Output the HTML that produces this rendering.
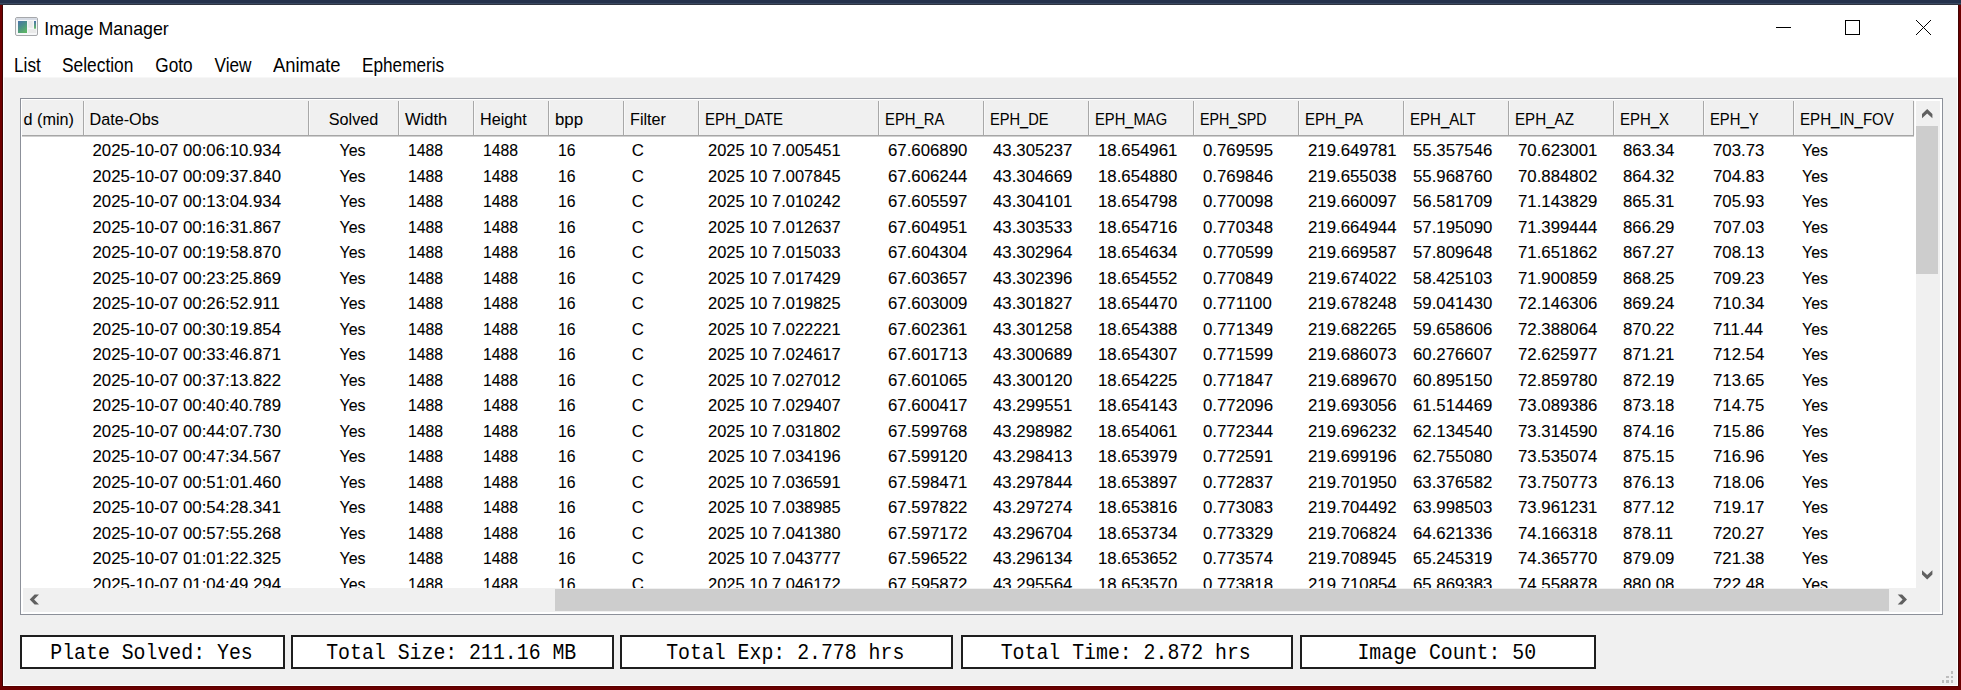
<!DOCTYPE html><html><head><meta charset="utf-8"><style>
*{margin:0;padding:0;box-sizing:border-box}
html,body{width:1961px;height:690px;overflow:hidden;background:#fff}
body{position:relative;font-family:"Liberation Sans",sans-serif;color:#000}
.a{position:absolute}
.t{position:absolute;white-space:pre;line-height:1}
.d{-webkit-text-stroke:0.1px #000}
.h{-webkit-text-stroke:0.05px #000}
</style></head><body>
<div class="a" style="left:0;top:0;width:1961px;height:3px;background:#25324c"></div>
<div class="a" style="left:0;top:3px;width:1961px;height:1px;background:#3a4962"></div>
<div class="a" style="left:0;top:4px;width:1961px;height:1px;background:#2f3440"></div>
<div class="a" style="left:0;top:5px;width:2px;height:685px;background:#700000"></div>
<div class="a" style="left:2px;top:5px;width:1px;height:681px;background:#3c0505"></div>
<div class="a" style="left:1959px;top:5px;width:2px;height:685px;background:#6b0000"></div>
<div class="a" style="left:1958px;top:5px;width:1px;height:681px;background:#420303"></div>
<div class="a" style="left:0;top:687px;width:1961px;height:3px;background:#6b0000"></div>
<div class="a" style="left:2px;top:686px;width:1957px;height:1px;background:#580000"></div>
<div class="a" style="left:4px;top:77px;width:1953px;height:1px;background:#f7f7f7"></div>
<div class="a" style="left:4px;top:78px;width:1953px;height:607px;background:#f0f0f0"></div>
<svg class="a" style="left:15px;top:17px" width="24" height="20" viewBox="0 0 24 20">
<defs><linearGradient id="g1" x1="0" y1="0" x2="0.6" y2="1"><stop offset="0" stop-color="#4a72aa"/><stop offset="0.5" stop-color="#4c9088"/><stop offset="1" stop-color="#5cb268"/></linearGradient>
<linearGradient id="g2" x1="0" y1="0" x2="0" y2="1"><stop offset="0" stop-color="#4a72aa"/><stop offset="1" stop-color="#66bb66"/></linearGradient></defs>
<rect x="0.5" y="0.5" width="22" height="18" rx="1.5" fill="#f6f7f8" stroke="#a6a8ab"/>
<rect x="1" y="1" width="21" height="2" fill="#d6dbe4"/>
<rect x="3" y="4" width="9" height="12" fill="url(#g1)"/>
<rect x="13.2" y="4" width="4.5" height="6.7" fill="#e9e9e9"/>
<rect x="19" y="4" width="2" height="7.7" fill="url(#g2)"/>
<rect x="13.2" y="12.3" width="8" height="3.7" fill="#e9e9e9"/>
</svg>
<div class="t" style="left:44.2px;top:21px;font-size:17.8px">Image Manager</div>
<div class="a" style="left:1776px;top:27px;width:15px;height:1.2px;background:#000"></div>
<div class="a" style="left:1845px;top:20px;width:15px;height:15px;border:1.3px solid #000"></div>
<svg class="a" style="left:1915px;top:19px" width="17" height="17" viewBox="0 0 17 17"><path d="M1 1L16 16M16 1L1 16" stroke="#000" stroke-width="1"/></svg>
<div class="t" style="left:14px;top:56px;font-size:17.2px;transform:scale(1,1.15);transform-origin:0 0">List</div>
<div class="t" style="left:61.7px;top:56px;font-size:17.2px;transform:scale(1.01,1.15);transform-origin:0 0">Selection</div>
<div class="t" style="left:155.3px;top:56px;font-size:17.2px;transform:scale(1,1.15);transform-origin:0 0">Goto</div>
<div class="t" style="left:214.6px;top:56px;font-size:17.2px;transform:scale(1,1.15);transform-origin:0 0">View</div>
<div class="t" style="left:273.3px;top:56px;font-size:17.2px;transform:scale(1.07,1.15);transform-origin:0 0">Animate</div>
<div class="t" style="left:362px;top:56px;font-size:17.2px;transform:scale(1,1.15);transform-origin:0 0">Ephemeris</div>
<div class="a" style="left:20px;top:98px;width:1923px;height:517px;border:1px solid #8c9099;background:#fff"></div>
<div class="a" style="left:22px;top:100px;width:1892px;height:35px;background:#f0f0f0"></div>
<div class="a" style="left:22px;top:135px;width:1892px;height:1px;background:#a6a6a6"></div>
<div class="a" style="left:22px;top:136px;width:1892px;height:1px;background:#cfcfcf"></div>
<div class="a" style="left:83px;top:101px;width:1px;height:34px;background:#a8a8a8"></div>
<div class="a" style="left:84px;top:101px;width:1px;height:34px;background:#f8f8f8"></div>
<div class="a" style="left:308px;top:101px;width:1px;height:34px;background:#a8a8a8"></div>
<div class="a" style="left:309px;top:101px;width:1px;height:34px;background:#f8f8f8"></div>
<div class="a" style="left:398px;top:101px;width:1px;height:34px;background:#a8a8a8"></div>
<div class="a" style="left:399px;top:101px;width:1px;height:34px;background:#f8f8f8"></div>
<div class="a" style="left:473px;top:101px;width:1px;height:34px;background:#a8a8a8"></div>
<div class="a" style="left:474px;top:101px;width:1px;height:34px;background:#f8f8f8"></div>
<div class="a" style="left:548px;top:101px;width:1px;height:34px;background:#a8a8a8"></div>
<div class="a" style="left:549px;top:101px;width:1px;height:34px;background:#f8f8f8"></div>
<div class="a" style="left:623px;top:101px;width:1px;height:34px;background:#a8a8a8"></div>
<div class="a" style="left:624px;top:101px;width:1px;height:34px;background:#f8f8f8"></div>
<div class="a" style="left:698px;top:101px;width:1px;height:34px;background:#a8a8a8"></div>
<div class="a" style="left:699px;top:101px;width:1px;height:34px;background:#f8f8f8"></div>
<div class="a" style="left:878px;top:101px;width:1px;height:34px;background:#a8a8a8"></div>
<div class="a" style="left:879px;top:101px;width:1px;height:34px;background:#f8f8f8"></div>
<div class="a" style="left:983px;top:101px;width:1px;height:34px;background:#a8a8a8"></div>
<div class="a" style="left:984px;top:101px;width:1px;height:34px;background:#f8f8f8"></div>
<div class="a" style="left:1088px;top:101px;width:1px;height:34px;background:#a8a8a8"></div>
<div class="a" style="left:1089px;top:101px;width:1px;height:34px;background:#f8f8f8"></div>
<div class="a" style="left:1193px;top:101px;width:1px;height:34px;background:#a8a8a8"></div>
<div class="a" style="left:1194px;top:101px;width:1px;height:34px;background:#f8f8f8"></div>
<div class="a" style="left:1298px;top:101px;width:1px;height:34px;background:#a8a8a8"></div>
<div class="a" style="left:1299px;top:101px;width:1px;height:34px;background:#f8f8f8"></div>
<div class="a" style="left:1403px;top:101px;width:1px;height:34px;background:#a8a8a8"></div>
<div class="a" style="left:1404px;top:101px;width:1px;height:34px;background:#f8f8f8"></div>
<div class="a" style="left:1508px;top:101px;width:1px;height:34px;background:#a8a8a8"></div>
<div class="a" style="left:1509px;top:101px;width:1px;height:34px;background:#f8f8f8"></div>
<div class="a" style="left:1613px;top:101px;width:1px;height:34px;background:#a8a8a8"></div>
<div class="a" style="left:1614px;top:101px;width:1px;height:34px;background:#f8f8f8"></div>
<div class="a" style="left:1703px;top:101px;width:1px;height:34px;background:#a8a8a8"></div>
<div class="a" style="left:1704px;top:101px;width:1px;height:34px;background:#f8f8f8"></div>
<div class="a" style="left:1793px;top:101px;width:1px;height:34px;background:#a8a8a8"></div>
<div class="a" style="left:1794px;top:101px;width:1px;height:34px;background:#f8f8f8"></div>
<div class="a" style="left:1913px;top:101px;width:1px;height:34px;background:#a8a8a8"></div>
<div class="a" style="left:1914px;top:101px;width:1px;height:34px;background:#f8f8f8"></div>
<div class="t h" style="left:23.5px;top:111.4px;font-size:16.2px">d (min)</div>
<div class="t h" style="left:89.5px;top:111.4px;font-size:16.2px;transform:scaleX(1);transform-origin:0 0">Date-Obs</div>
<div class="t h" style="left:308.5px;width:90.0px;text-align:center;top:111.4px;font-size:16.2px">Solved</div>
<div class="t h" style="left:405.0px;top:111.4px;font-size:16.2px;transform:scaleX(1.02);transform-origin:0 0">Width</div>
<div class="t h" style="left:480.0px;top:111.4px;font-size:16.2px;transform:scaleX(1);transform-origin:0 0">Height</div>
<div class="t h" style="left:555.0px;top:111.4px;font-size:16.2px;transform:scaleX(1.04);transform-origin:0 0">bpp</div>
<div class="t h" style="left:630.0px;top:111.4px;font-size:16.2px;transform:scaleX(1);transform-origin:0 0">Filter</div>
<div class="t h" style="left:705.0px;top:111.4px;font-size:16.2px;transform:scaleX(0.927);transform-origin:0 0">EPH_DATE</div>
<div class="t h" style="left:885.0px;top:111.4px;font-size:16.2px;transform:scaleX(0.917);transform-origin:0 0">EPH_RA</div>
<div class="t h" style="left:990.0px;top:111.4px;font-size:16.2px;transform:scaleX(0.905);transform-origin:0 0">EPH_DE</div>
<div class="t h" style="left:1095.0px;top:111.4px;font-size:16.2px;transform:scaleX(0.912);transform-origin:0 0">EPH_MAG</div>
<div class="t h" style="left:1200.0px;top:111.4px;font-size:16.2px;transform:scaleX(0.882);transform-origin:0 0">EPH_SPD</div>
<div class="t h" style="left:1305.0px;top:111.4px;font-size:16.2px;transform:scaleX(0.926);transform-origin:0 0">EPH_PA</div>
<div class="t h" style="left:1410.0px;top:111.4px;font-size:16.2px;transform:scaleX(0.928);transform-origin:0 0">EPH_ALT</div>
<div class="t h" style="left:1515.0px;top:111.4px;font-size:16.2px;transform:scaleX(0.936);transform-origin:0 0">EPH_AZ</div>
<div class="t h" style="left:1620.0px;top:111.4px;font-size:16.2px;transform:scaleX(0.925);transform-origin:0 0">EPH_X</div>
<div class="t h" style="left:1710.0px;top:111.4px;font-size:16.2px;transform:scaleX(0.914);transform-origin:0 0">EPH_Y</div>
<div class="t h" style="left:1800.0px;top:111.4px;font-size:16.2px;transform:scaleX(0.932);transform-origin:0 0">EPH_IN_FOV</div>
<div class="a" style="left:22px;top:137px;width:1894px;height:451px;overflow:hidden">
<div class="t d" style="left:70.5px;top:6.05px;font-size:16.8px">2025-10-07 00:06:10.934</div>
<div class="t d" style="left:286.5px;width:90.0px;text-align:center;top:6.05px;font-size:16.8px;transform:translateX(-1.5px) scaleX(0.95)">Yes</div>
<div class="t d" style="left:386.3px;top:6.05px;font-size:16.8px;transform:scaleX(0.94);transform-origin:0 0">1488</div>
<div class="t d" style="left:461.3px;top:6.05px;font-size:16.8px;transform:scaleX(0.94);transform-origin:0 0">1488</div>
<div class="t d" style="left:536.2px;top:6.05px;font-size:16.8px;transform:scaleX(0.94);transform-origin:0 0">16</div>
<div class="t d" style="left:609.8px;top:6.05px;font-size:16.8px">C</div>
<div class="t d" style="left:686.0px;top:6.05px;font-size:16.8px;transform:scaleX(0.98);transform-origin:0 0">2025 10 7.005451</div>
<div class="t d" style="left:866.0px;top:6.05px;font-size:16.8px">67.606890</div>
<div class="t d" style="left:971.0px;top:6.05px;font-size:16.8px">43.305237</div>
<div class="t d" style="left:1076.0px;top:6.05px;font-size:16.8px">18.654961</div>
<div class="t d" style="left:1181.0px;top:6.05px;font-size:16.8px">0.769595</div>
<div class="t d" style="left:1286.0px;top:6.05px;font-size:16.8px">219.649781</div>
<div class="t d" style="left:1391.0px;top:6.05px;font-size:16.8px">55.357546</div>
<div class="t d" style="left:1496.0px;top:6.05px;font-size:16.8px">70.623001</div>
<div class="t d" style="left:1601.0px;top:6.05px;font-size:16.8px">863.34</div>
<div class="t d" style="left:1691.0px;top:6.05px;font-size:16.8px">703.73</div>
<div class="t d" style="left:1780.4px;top:6.05px;font-size:16.8px;transform:scaleX(0.95);transform-origin:0 0">Yes</div>
<div class="t d" style="left:70.5px;top:31.55px;font-size:16.8px">2025-10-07 00:09:37.840</div>
<div class="t d" style="left:286.5px;width:90.0px;text-align:center;top:31.55px;font-size:16.8px;transform:translateX(-1.5px) scaleX(0.95)">Yes</div>
<div class="t d" style="left:386.3px;top:31.55px;font-size:16.8px;transform:scaleX(0.94);transform-origin:0 0">1488</div>
<div class="t d" style="left:461.3px;top:31.55px;font-size:16.8px;transform:scaleX(0.94);transform-origin:0 0">1488</div>
<div class="t d" style="left:536.2px;top:31.55px;font-size:16.8px;transform:scaleX(0.94);transform-origin:0 0">16</div>
<div class="t d" style="left:609.8px;top:31.55px;font-size:16.8px">C</div>
<div class="t d" style="left:686.0px;top:31.55px;font-size:16.8px;transform:scaleX(0.98);transform-origin:0 0">2025 10 7.007845</div>
<div class="t d" style="left:866.0px;top:31.55px;font-size:16.8px">67.606244</div>
<div class="t d" style="left:971.0px;top:31.55px;font-size:16.8px">43.304669</div>
<div class="t d" style="left:1076.0px;top:31.55px;font-size:16.8px">18.654880</div>
<div class="t d" style="left:1181.0px;top:31.55px;font-size:16.8px">0.769846</div>
<div class="t d" style="left:1286.0px;top:31.55px;font-size:16.8px">219.655038</div>
<div class="t d" style="left:1391.0px;top:31.55px;font-size:16.8px">55.968760</div>
<div class="t d" style="left:1496.0px;top:31.55px;font-size:16.8px">70.884802</div>
<div class="t d" style="left:1601.0px;top:31.55px;font-size:16.8px">864.32</div>
<div class="t d" style="left:1691.0px;top:31.55px;font-size:16.8px">704.83</div>
<div class="t d" style="left:1780.4px;top:31.55px;font-size:16.8px;transform:scaleX(0.95);transform-origin:0 0">Yes</div>
<div class="t d" style="left:70.5px;top:57.05px;font-size:16.8px">2025-10-07 00:13:04.934</div>
<div class="t d" style="left:286.5px;width:90.0px;text-align:center;top:57.05px;font-size:16.8px;transform:translateX(-1.5px) scaleX(0.95)">Yes</div>
<div class="t d" style="left:386.3px;top:57.05px;font-size:16.8px;transform:scaleX(0.94);transform-origin:0 0">1488</div>
<div class="t d" style="left:461.3px;top:57.05px;font-size:16.8px;transform:scaleX(0.94);transform-origin:0 0">1488</div>
<div class="t d" style="left:536.2px;top:57.05px;font-size:16.8px;transform:scaleX(0.94);transform-origin:0 0">16</div>
<div class="t d" style="left:609.8px;top:57.05px;font-size:16.8px">C</div>
<div class="t d" style="left:686.0px;top:57.05px;font-size:16.8px;transform:scaleX(0.98);transform-origin:0 0">2025 10 7.010242</div>
<div class="t d" style="left:866.0px;top:57.05px;font-size:16.8px">67.605597</div>
<div class="t d" style="left:971.0px;top:57.05px;font-size:16.8px">43.304101</div>
<div class="t d" style="left:1076.0px;top:57.05px;font-size:16.8px">18.654798</div>
<div class="t d" style="left:1181.0px;top:57.05px;font-size:16.8px">0.770098</div>
<div class="t d" style="left:1286.0px;top:57.05px;font-size:16.8px">219.660097</div>
<div class="t d" style="left:1391.0px;top:57.05px;font-size:16.8px">56.581709</div>
<div class="t d" style="left:1496.0px;top:57.05px;font-size:16.8px">71.143829</div>
<div class="t d" style="left:1601.0px;top:57.05px;font-size:16.8px">865.31</div>
<div class="t d" style="left:1691.0px;top:57.05px;font-size:16.8px">705.93</div>
<div class="t d" style="left:1780.4px;top:57.05px;font-size:16.8px;transform:scaleX(0.95);transform-origin:0 0">Yes</div>
<div class="t d" style="left:70.5px;top:82.55px;font-size:16.8px">2025-10-07 00:16:31.867</div>
<div class="t d" style="left:286.5px;width:90.0px;text-align:center;top:82.55px;font-size:16.8px;transform:translateX(-1.5px) scaleX(0.95)">Yes</div>
<div class="t d" style="left:386.3px;top:82.55px;font-size:16.8px;transform:scaleX(0.94);transform-origin:0 0">1488</div>
<div class="t d" style="left:461.3px;top:82.55px;font-size:16.8px;transform:scaleX(0.94);transform-origin:0 0">1488</div>
<div class="t d" style="left:536.2px;top:82.55px;font-size:16.8px;transform:scaleX(0.94);transform-origin:0 0">16</div>
<div class="t d" style="left:609.8px;top:82.55px;font-size:16.8px">C</div>
<div class="t d" style="left:686.0px;top:82.55px;font-size:16.8px;transform:scaleX(0.98);transform-origin:0 0">2025 10 7.012637</div>
<div class="t d" style="left:866.0px;top:82.55px;font-size:16.8px">67.604951</div>
<div class="t d" style="left:971.0px;top:82.55px;font-size:16.8px">43.303533</div>
<div class="t d" style="left:1076.0px;top:82.55px;font-size:16.8px">18.654716</div>
<div class="t d" style="left:1181.0px;top:82.55px;font-size:16.8px">0.770348</div>
<div class="t d" style="left:1286.0px;top:82.55px;font-size:16.8px">219.664944</div>
<div class="t d" style="left:1391.0px;top:82.55px;font-size:16.8px">57.195090</div>
<div class="t d" style="left:1496.0px;top:82.55px;font-size:16.8px">71.399444</div>
<div class="t d" style="left:1601.0px;top:82.55px;font-size:16.8px">866.29</div>
<div class="t d" style="left:1691.0px;top:82.55px;font-size:16.8px">707.03</div>
<div class="t d" style="left:1780.4px;top:82.55px;font-size:16.8px;transform:scaleX(0.95);transform-origin:0 0">Yes</div>
<div class="t d" style="left:70.5px;top:108.05px;font-size:16.8px">2025-10-07 00:19:58.870</div>
<div class="t d" style="left:286.5px;width:90.0px;text-align:center;top:108.05px;font-size:16.8px;transform:translateX(-1.5px) scaleX(0.95)">Yes</div>
<div class="t d" style="left:386.3px;top:108.05px;font-size:16.8px;transform:scaleX(0.94);transform-origin:0 0">1488</div>
<div class="t d" style="left:461.3px;top:108.05px;font-size:16.8px;transform:scaleX(0.94);transform-origin:0 0">1488</div>
<div class="t d" style="left:536.2px;top:108.05px;font-size:16.8px;transform:scaleX(0.94);transform-origin:0 0">16</div>
<div class="t d" style="left:609.8px;top:108.05px;font-size:16.8px">C</div>
<div class="t d" style="left:686.0px;top:108.05px;font-size:16.8px;transform:scaleX(0.98);transform-origin:0 0">2025 10 7.015033</div>
<div class="t d" style="left:866.0px;top:108.05px;font-size:16.8px">67.604304</div>
<div class="t d" style="left:971.0px;top:108.05px;font-size:16.8px">43.302964</div>
<div class="t d" style="left:1076.0px;top:108.05px;font-size:16.8px">18.654634</div>
<div class="t d" style="left:1181.0px;top:108.05px;font-size:16.8px">0.770599</div>
<div class="t d" style="left:1286.0px;top:108.05px;font-size:16.8px">219.669587</div>
<div class="t d" style="left:1391.0px;top:108.05px;font-size:16.8px">57.809648</div>
<div class="t d" style="left:1496.0px;top:108.05px;font-size:16.8px">71.651862</div>
<div class="t d" style="left:1601.0px;top:108.05px;font-size:16.8px">867.27</div>
<div class="t d" style="left:1691.0px;top:108.05px;font-size:16.8px">708.13</div>
<div class="t d" style="left:1780.4px;top:108.05px;font-size:16.8px;transform:scaleX(0.95);transform-origin:0 0">Yes</div>
<div class="t d" style="left:70.5px;top:133.55px;font-size:16.8px">2025-10-07 00:23:25.869</div>
<div class="t d" style="left:286.5px;width:90.0px;text-align:center;top:133.55px;font-size:16.8px;transform:translateX(-1.5px) scaleX(0.95)">Yes</div>
<div class="t d" style="left:386.3px;top:133.55px;font-size:16.8px;transform:scaleX(0.94);transform-origin:0 0">1488</div>
<div class="t d" style="left:461.3px;top:133.55px;font-size:16.8px;transform:scaleX(0.94);transform-origin:0 0">1488</div>
<div class="t d" style="left:536.2px;top:133.55px;font-size:16.8px;transform:scaleX(0.94);transform-origin:0 0">16</div>
<div class="t d" style="left:609.8px;top:133.55px;font-size:16.8px">C</div>
<div class="t d" style="left:686.0px;top:133.55px;font-size:16.8px;transform:scaleX(0.98);transform-origin:0 0">2025 10 7.017429</div>
<div class="t d" style="left:866.0px;top:133.55px;font-size:16.8px">67.603657</div>
<div class="t d" style="left:971.0px;top:133.55px;font-size:16.8px">43.302396</div>
<div class="t d" style="left:1076.0px;top:133.55px;font-size:16.8px">18.654552</div>
<div class="t d" style="left:1181.0px;top:133.55px;font-size:16.8px">0.770849</div>
<div class="t d" style="left:1286.0px;top:133.55px;font-size:16.8px">219.674022</div>
<div class="t d" style="left:1391.0px;top:133.55px;font-size:16.8px">58.425103</div>
<div class="t d" style="left:1496.0px;top:133.55px;font-size:16.8px">71.900859</div>
<div class="t d" style="left:1601.0px;top:133.55px;font-size:16.8px">868.25</div>
<div class="t d" style="left:1691.0px;top:133.55px;font-size:16.8px">709.23</div>
<div class="t d" style="left:1780.4px;top:133.55px;font-size:16.8px;transform:scaleX(0.95);transform-origin:0 0">Yes</div>
<div class="t d" style="left:70.5px;top:159.05px;font-size:16.8px">2025-10-07 00:26:52.911</div>
<div class="t d" style="left:286.5px;width:90.0px;text-align:center;top:159.05px;font-size:16.8px;transform:translateX(-1.5px) scaleX(0.95)">Yes</div>
<div class="t d" style="left:386.3px;top:159.05px;font-size:16.8px;transform:scaleX(0.94);transform-origin:0 0">1488</div>
<div class="t d" style="left:461.3px;top:159.05px;font-size:16.8px;transform:scaleX(0.94);transform-origin:0 0">1488</div>
<div class="t d" style="left:536.2px;top:159.05px;font-size:16.8px;transform:scaleX(0.94);transform-origin:0 0">16</div>
<div class="t d" style="left:609.8px;top:159.05px;font-size:16.8px">C</div>
<div class="t d" style="left:686.0px;top:159.05px;font-size:16.8px;transform:scaleX(0.98);transform-origin:0 0">2025 10 7.019825</div>
<div class="t d" style="left:866.0px;top:159.05px;font-size:16.8px">67.603009</div>
<div class="t d" style="left:971.0px;top:159.05px;font-size:16.8px">43.301827</div>
<div class="t d" style="left:1076.0px;top:159.05px;font-size:16.8px">18.654470</div>
<div class="t d" style="left:1181.0px;top:159.05px;font-size:16.8px">0.771100</div>
<div class="t d" style="left:1286.0px;top:159.05px;font-size:16.8px">219.678248</div>
<div class="t d" style="left:1391.0px;top:159.05px;font-size:16.8px">59.041430</div>
<div class="t d" style="left:1496.0px;top:159.05px;font-size:16.8px">72.146306</div>
<div class="t d" style="left:1601.0px;top:159.05px;font-size:16.8px">869.24</div>
<div class="t d" style="left:1691.0px;top:159.05px;font-size:16.8px">710.34</div>
<div class="t d" style="left:1780.4px;top:159.05px;font-size:16.8px;transform:scaleX(0.95);transform-origin:0 0">Yes</div>
<div class="t d" style="left:70.5px;top:184.55px;font-size:16.8px">2025-10-07 00:30:19.854</div>
<div class="t d" style="left:286.5px;width:90.0px;text-align:center;top:184.55px;font-size:16.8px;transform:translateX(-1.5px) scaleX(0.95)">Yes</div>
<div class="t d" style="left:386.3px;top:184.55px;font-size:16.8px;transform:scaleX(0.94);transform-origin:0 0">1488</div>
<div class="t d" style="left:461.3px;top:184.55px;font-size:16.8px;transform:scaleX(0.94);transform-origin:0 0">1488</div>
<div class="t d" style="left:536.2px;top:184.55px;font-size:16.8px;transform:scaleX(0.94);transform-origin:0 0">16</div>
<div class="t d" style="left:609.8px;top:184.55px;font-size:16.8px">C</div>
<div class="t d" style="left:686.0px;top:184.55px;font-size:16.8px;transform:scaleX(0.98);transform-origin:0 0">2025 10 7.022221</div>
<div class="t d" style="left:866.0px;top:184.55px;font-size:16.8px">67.602361</div>
<div class="t d" style="left:971.0px;top:184.55px;font-size:16.8px">43.301258</div>
<div class="t d" style="left:1076.0px;top:184.55px;font-size:16.8px">18.654388</div>
<div class="t d" style="left:1181.0px;top:184.55px;font-size:16.8px">0.771349</div>
<div class="t d" style="left:1286.0px;top:184.55px;font-size:16.8px">219.682265</div>
<div class="t d" style="left:1391.0px;top:184.55px;font-size:16.8px">59.658606</div>
<div class="t d" style="left:1496.0px;top:184.55px;font-size:16.8px">72.388064</div>
<div class="t d" style="left:1601.0px;top:184.55px;font-size:16.8px">870.22</div>
<div class="t d" style="left:1691.0px;top:184.55px;font-size:16.8px">711.44</div>
<div class="t d" style="left:1780.4px;top:184.55px;font-size:16.8px;transform:scaleX(0.95);transform-origin:0 0">Yes</div>
<div class="t d" style="left:70.5px;top:210.05px;font-size:16.8px">2025-10-07 00:33:46.871</div>
<div class="t d" style="left:286.5px;width:90.0px;text-align:center;top:210.05px;font-size:16.8px;transform:translateX(-1.5px) scaleX(0.95)">Yes</div>
<div class="t d" style="left:386.3px;top:210.05px;font-size:16.8px;transform:scaleX(0.94);transform-origin:0 0">1488</div>
<div class="t d" style="left:461.3px;top:210.05px;font-size:16.8px;transform:scaleX(0.94);transform-origin:0 0">1488</div>
<div class="t d" style="left:536.2px;top:210.05px;font-size:16.8px;transform:scaleX(0.94);transform-origin:0 0">16</div>
<div class="t d" style="left:609.8px;top:210.05px;font-size:16.8px">C</div>
<div class="t d" style="left:686.0px;top:210.05px;font-size:16.8px;transform:scaleX(0.98);transform-origin:0 0">2025 10 7.024617</div>
<div class="t d" style="left:866.0px;top:210.05px;font-size:16.8px">67.601713</div>
<div class="t d" style="left:971.0px;top:210.05px;font-size:16.8px">43.300689</div>
<div class="t d" style="left:1076.0px;top:210.05px;font-size:16.8px">18.654307</div>
<div class="t d" style="left:1181.0px;top:210.05px;font-size:16.8px">0.771599</div>
<div class="t d" style="left:1286.0px;top:210.05px;font-size:16.8px">219.686073</div>
<div class="t d" style="left:1391.0px;top:210.05px;font-size:16.8px">60.276607</div>
<div class="t d" style="left:1496.0px;top:210.05px;font-size:16.8px">72.625977</div>
<div class="t d" style="left:1601.0px;top:210.05px;font-size:16.8px">871.21</div>
<div class="t d" style="left:1691.0px;top:210.05px;font-size:16.8px">712.54</div>
<div class="t d" style="left:1780.4px;top:210.05px;font-size:16.8px;transform:scaleX(0.95);transform-origin:0 0">Yes</div>
<div class="t d" style="left:70.5px;top:235.55px;font-size:16.8px">2025-10-07 00:37:13.822</div>
<div class="t d" style="left:286.5px;width:90.0px;text-align:center;top:235.55px;font-size:16.8px;transform:translateX(-1.5px) scaleX(0.95)">Yes</div>
<div class="t d" style="left:386.3px;top:235.55px;font-size:16.8px;transform:scaleX(0.94);transform-origin:0 0">1488</div>
<div class="t d" style="left:461.3px;top:235.55px;font-size:16.8px;transform:scaleX(0.94);transform-origin:0 0">1488</div>
<div class="t d" style="left:536.2px;top:235.55px;font-size:16.8px;transform:scaleX(0.94);transform-origin:0 0">16</div>
<div class="t d" style="left:609.8px;top:235.55px;font-size:16.8px">C</div>
<div class="t d" style="left:686.0px;top:235.55px;font-size:16.8px;transform:scaleX(0.98);transform-origin:0 0">2025 10 7.027012</div>
<div class="t d" style="left:866.0px;top:235.55px;font-size:16.8px">67.601065</div>
<div class="t d" style="left:971.0px;top:235.55px;font-size:16.8px">43.300120</div>
<div class="t d" style="left:1076.0px;top:235.55px;font-size:16.8px">18.654225</div>
<div class="t d" style="left:1181.0px;top:235.55px;font-size:16.8px">0.771847</div>
<div class="t d" style="left:1286.0px;top:235.55px;font-size:16.8px">219.689670</div>
<div class="t d" style="left:1391.0px;top:235.55px;font-size:16.8px">60.895150</div>
<div class="t d" style="left:1496.0px;top:235.55px;font-size:16.8px">72.859780</div>
<div class="t d" style="left:1601.0px;top:235.55px;font-size:16.8px">872.19</div>
<div class="t d" style="left:1691.0px;top:235.55px;font-size:16.8px">713.65</div>
<div class="t d" style="left:1780.4px;top:235.55px;font-size:16.8px;transform:scaleX(0.95);transform-origin:0 0">Yes</div>
<div class="t d" style="left:70.5px;top:261.05px;font-size:16.8px">2025-10-07 00:40:40.789</div>
<div class="t d" style="left:286.5px;width:90.0px;text-align:center;top:261.05px;font-size:16.8px;transform:translateX(-1.5px) scaleX(0.95)">Yes</div>
<div class="t d" style="left:386.3px;top:261.05px;font-size:16.8px;transform:scaleX(0.94);transform-origin:0 0">1488</div>
<div class="t d" style="left:461.3px;top:261.05px;font-size:16.8px;transform:scaleX(0.94);transform-origin:0 0">1488</div>
<div class="t d" style="left:536.2px;top:261.05px;font-size:16.8px;transform:scaleX(0.94);transform-origin:0 0">16</div>
<div class="t d" style="left:609.8px;top:261.05px;font-size:16.8px">C</div>
<div class="t d" style="left:686.0px;top:261.05px;font-size:16.8px;transform:scaleX(0.98);transform-origin:0 0">2025 10 7.029407</div>
<div class="t d" style="left:866.0px;top:261.05px;font-size:16.8px">67.600417</div>
<div class="t d" style="left:971.0px;top:261.05px;font-size:16.8px">43.299551</div>
<div class="t d" style="left:1076.0px;top:261.05px;font-size:16.8px">18.654143</div>
<div class="t d" style="left:1181.0px;top:261.05px;font-size:16.8px">0.772096</div>
<div class="t d" style="left:1286.0px;top:261.05px;font-size:16.8px">219.693056</div>
<div class="t d" style="left:1391.0px;top:261.05px;font-size:16.8px">61.514469</div>
<div class="t d" style="left:1496.0px;top:261.05px;font-size:16.8px">73.089386</div>
<div class="t d" style="left:1601.0px;top:261.05px;font-size:16.8px">873.18</div>
<div class="t d" style="left:1691.0px;top:261.05px;font-size:16.8px">714.75</div>
<div class="t d" style="left:1780.4px;top:261.05px;font-size:16.8px;transform:scaleX(0.95);transform-origin:0 0">Yes</div>
<div class="t d" style="left:70.5px;top:286.55px;font-size:16.8px">2025-10-07 00:44:07.730</div>
<div class="t d" style="left:286.5px;width:90.0px;text-align:center;top:286.55px;font-size:16.8px;transform:translateX(-1.5px) scaleX(0.95)">Yes</div>
<div class="t d" style="left:386.3px;top:286.55px;font-size:16.8px;transform:scaleX(0.94);transform-origin:0 0">1488</div>
<div class="t d" style="left:461.3px;top:286.55px;font-size:16.8px;transform:scaleX(0.94);transform-origin:0 0">1488</div>
<div class="t d" style="left:536.2px;top:286.55px;font-size:16.8px;transform:scaleX(0.94);transform-origin:0 0">16</div>
<div class="t d" style="left:609.8px;top:286.55px;font-size:16.8px">C</div>
<div class="t d" style="left:686.0px;top:286.55px;font-size:16.8px;transform:scaleX(0.98);transform-origin:0 0">2025 10 7.031802</div>
<div class="t d" style="left:866.0px;top:286.55px;font-size:16.8px">67.599768</div>
<div class="t d" style="left:971.0px;top:286.55px;font-size:16.8px">43.298982</div>
<div class="t d" style="left:1076.0px;top:286.55px;font-size:16.8px">18.654061</div>
<div class="t d" style="left:1181.0px;top:286.55px;font-size:16.8px">0.772344</div>
<div class="t d" style="left:1286.0px;top:286.55px;font-size:16.8px">219.696232</div>
<div class="t d" style="left:1391.0px;top:286.55px;font-size:16.8px">62.134540</div>
<div class="t d" style="left:1496.0px;top:286.55px;font-size:16.8px">73.314590</div>
<div class="t d" style="left:1601.0px;top:286.55px;font-size:16.8px">874.16</div>
<div class="t d" style="left:1691.0px;top:286.55px;font-size:16.8px">715.86</div>
<div class="t d" style="left:1780.4px;top:286.55px;font-size:16.8px;transform:scaleX(0.95);transform-origin:0 0">Yes</div>
<div class="t d" style="left:70.5px;top:312.05px;font-size:16.8px">2025-10-07 00:47:34.567</div>
<div class="t d" style="left:286.5px;width:90.0px;text-align:center;top:312.05px;font-size:16.8px;transform:translateX(-1.5px) scaleX(0.95)">Yes</div>
<div class="t d" style="left:386.3px;top:312.05px;font-size:16.8px;transform:scaleX(0.94);transform-origin:0 0">1488</div>
<div class="t d" style="left:461.3px;top:312.05px;font-size:16.8px;transform:scaleX(0.94);transform-origin:0 0">1488</div>
<div class="t d" style="left:536.2px;top:312.05px;font-size:16.8px;transform:scaleX(0.94);transform-origin:0 0">16</div>
<div class="t d" style="left:609.8px;top:312.05px;font-size:16.8px">C</div>
<div class="t d" style="left:686.0px;top:312.05px;font-size:16.8px;transform:scaleX(0.98);transform-origin:0 0">2025 10 7.034196</div>
<div class="t d" style="left:866.0px;top:312.05px;font-size:16.8px">67.599120</div>
<div class="t d" style="left:971.0px;top:312.05px;font-size:16.8px">43.298413</div>
<div class="t d" style="left:1076.0px;top:312.05px;font-size:16.8px">18.653979</div>
<div class="t d" style="left:1181.0px;top:312.05px;font-size:16.8px">0.772591</div>
<div class="t d" style="left:1286.0px;top:312.05px;font-size:16.8px">219.699196</div>
<div class="t d" style="left:1391.0px;top:312.05px;font-size:16.8px">62.755080</div>
<div class="t d" style="left:1496.0px;top:312.05px;font-size:16.8px">73.535074</div>
<div class="t d" style="left:1601.0px;top:312.05px;font-size:16.8px">875.15</div>
<div class="t d" style="left:1691.0px;top:312.05px;font-size:16.8px">716.96</div>
<div class="t d" style="left:1780.4px;top:312.05px;font-size:16.8px;transform:scaleX(0.95);transform-origin:0 0">Yes</div>
<div class="t d" style="left:70.5px;top:337.55px;font-size:16.8px">2025-10-07 00:51:01.460</div>
<div class="t d" style="left:286.5px;width:90.0px;text-align:center;top:337.55px;font-size:16.8px;transform:translateX(-1.5px) scaleX(0.95)">Yes</div>
<div class="t d" style="left:386.3px;top:337.55px;font-size:16.8px;transform:scaleX(0.94);transform-origin:0 0">1488</div>
<div class="t d" style="left:461.3px;top:337.55px;font-size:16.8px;transform:scaleX(0.94);transform-origin:0 0">1488</div>
<div class="t d" style="left:536.2px;top:337.55px;font-size:16.8px;transform:scaleX(0.94);transform-origin:0 0">16</div>
<div class="t d" style="left:609.8px;top:337.55px;font-size:16.8px">C</div>
<div class="t d" style="left:686.0px;top:337.55px;font-size:16.8px;transform:scaleX(0.98);transform-origin:0 0">2025 10 7.036591</div>
<div class="t d" style="left:866.0px;top:337.55px;font-size:16.8px">67.598471</div>
<div class="t d" style="left:971.0px;top:337.55px;font-size:16.8px">43.297844</div>
<div class="t d" style="left:1076.0px;top:337.55px;font-size:16.8px">18.653897</div>
<div class="t d" style="left:1181.0px;top:337.55px;font-size:16.8px">0.772837</div>
<div class="t d" style="left:1286.0px;top:337.55px;font-size:16.8px">219.701950</div>
<div class="t d" style="left:1391.0px;top:337.55px;font-size:16.8px">63.376582</div>
<div class="t d" style="left:1496.0px;top:337.55px;font-size:16.8px">73.750773</div>
<div class="t d" style="left:1601.0px;top:337.55px;font-size:16.8px">876.13</div>
<div class="t d" style="left:1691.0px;top:337.55px;font-size:16.8px">718.06</div>
<div class="t d" style="left:1780.4px;top:337.55px;font-size:16.8px;transform:scaleX(0.95);transform-origin:0 0">Yes</div>
<div class="t d" style="left:70.5px;top:363.05px;font-size:16.8px">2025-10-07 00:54:28.341</div>
<div class="t d" style="left:286.5px;width:90.0px;text-align:center;top:363.05px;font-size:16.8px;transform:translateX(-1.5px) scaleX(0.95)">Yes</div>
<div class="t d" style="left:386.3px;top:363.05px;font-size:16.8px;transform:scaleX(0.94);transform-origin:0 0">1488</div>
<div class="t d" style="left:461.3px;top:363.05px;font-size:16.8px;transform:scaleX(0.94);transform-origin:0 0">1488</div>
<div class="t d" style="left:536.2px;top:363.05px;font-size:16.8px;transform:scaleX(0.94);transform-origin:0 0">16</div>
<div class="t d" style="left:609.8px;top:363.05px;font-size:16.8px">C</div>
<div class="t d" style="left:686.0px;top:363.05px;font-size:16.8px;transform:scaleX(0.98);transform-origin:0 0">2025 10 7.038985</div>
<div class="t d" style="left:866.0px;top:363.05px;font-size:16.8px">67.597822</div>
<div class="t d" style="left:971.0px;top:363.05px;font-size:16.8px">43.297274</div>
<div class="t d" style="left:1076.0px;top:363.05px;font-size:16.8px">18.653816</div>
<div class="t d" style="left:1181.0px;top:363.05px;font-size:16.8px">0.773083</div>
<div class="t d" style="left:1286.0px;top:363.05px;font-size:16.8px">219.704492</div>
<div class="t d" style="left:1391.0px;top:363.05px;font-size:16.8px">63.998503</div>
<div class="t d" style="left:1496.0px;top:363.05px;font-size:16.8px">73.961231</div>
<div class="t d" style="left:1601.0px;top:363.05px;font-size:16.8px">877.12</div>
<div class="t d" style="left:1691.0px;top:363.05px;font-size:16.8px">719.17</div>
<div class="t d" style="left:1780.4px;top:363.05px;font-size:16.8px;transform:scaleX(0.95);transform-origin:0 0">Yes</div>
<div class="t d" style="left:70.5px;top:388.55px;font-size:16.8px">2025-10-07 00:57:55.268</div>
<div class="t d" style="left:286.5px;width:90.0px;text-align:center;top:388.55px;font-size:16.8px;transform:translateX(-1.5px) scaleX(0.95)">Yes</div>
<div class="t d" style="left:386.3px;top:388.55px;font-size:16.8px;transform:scaleX(0.94);transform-origin:0 0">1488</div>
<div class="t d" style="left:461.3px;top:388.55px;font-size:16.8px;transform:scaleX(0.94);transform-origin:0 0">1488</div>
<div class="t d" style="left:536.2px;top:388.55px;font-size:16.8px;transform:scaleX(0.94);transform-origin:0 0">16</div>
<div class="t d" style="left:609.8px;top:388.55px;font-size:16.8px">C</div>
<div class="t d" style="left:686.0px;top:388.55px;font-size:16.8px;transform:scaleX(0.98);transform-origin:0 0">2025 10 7.041380</div>
<div class="t d" style="left:866.0px;top:388.55px;font-size:16.8px">67.597172</div>
<div class="t d" style="left:971.0px;top:388.55px;font-size:16.8px">43.296704</div>
<div class="t d" style="left:1076.0px;top:388.55px;font-size:16.8px">18.653734</div>
<div class="t d" style="left:1181.0px;top:388.55px;font-size:16.8px">0.773329</div>
<div class="t d" style="left:1286.0px;top:388.55px;font-size:16.8px">219.706824</div>
<div class="t d" style="left:1391.0px;top:388.55px;font-size:16.8px">64.621336</div>
<div class="t d" style="left:1496.0px;top:388.55px;font-size:16.8px">74.166318</div>
<div class="t d" style="left:1601.0px;top:388.55px;font-size:16.8px">878.11</div>
<div class="t d" style="left:1691.0px;top:388.55px;font-size:16.8px">720.27</div>
<div class="t d" style="left:1780.4px;top:388.55px;font-size:16.8px;transform:scaleX(0.95);transform-origin:0 0">Yes</div>
<div class="t d" style="left:70.5px;top:414.05px;font-size:16.8px">2025-10-07 01:01:22.325</div>
<div class="t d" style="left:286.5px;width:90.0px;text-align:center;top:414.05px;font-size:16.8px;transform:translateX(-1.5px) scaleX(0.95)">Yes</div>
<div class="t d" style="left:386.3px;top:414.05px;font-size:16.8px;transform:scaleX(0.94);transform-origin:0 0">1488</div>
<div class="t d" style="left:461.3px;top:414.05px;font-size:16.8px;transform:scaleX(0.94);transform-origin:0 0">1488</div>
<div class="t d" style="left:536.2px;top:414.05px;font-size:16.8px;transform:scaleX(0.94);transform-origin:0 0">16</div>
<div class="t d" style="left:609.8px;top:414.05px;font-size:16.8px">C</div>
<div class="t d" style="left:686.0px;top:414.05px;font-size:16.8px;transform:scaleX(0.98);transform-origin:0 0">2025 10 7.043777</div>
<div class="t d" style="left:866.0px;top:414.05px;font-size:16.8px">67.596522</div>
<div class="t d" style="left:971.0px;top:414.05px;font-size:16.8px">43.296134</div>
<div class="t d" style="left:1076.0px;top:414.05px;font-size:16.8px">18.653652</div>
<div class="t d" style="left:1181.0px;top:414.05px;font-size:16.8px">0.773574</div>
<div class="t d" style="left:1286.0px;top:414.05px;font-size:16.8px">219.708945</div>
<div class="t d" style="left:1391.0px;top:414.05px;font-size:16.8px">65.245319</div>
<div class="t d" style="left:1496.0px;top:414.05px;font-size:16.8px">74.365770</div>
<div class="t d" style="left:1601.0px;top:414.05px;font-size:16.8px">879.09</div>
<div class="t d" style="left:1691.0px;top:414.05px;font-size:16.8px">721.38</div>
<div class="t d" style="left:1780.4px;top:414.05px;font-size:16.8px;transform:scaleX(0.95);transform-origin:0 0">Yes</div>
<div class="t d" style="left:70.5px;top:439.55px;font-size:16.8px">2025-10-07 01:04:49.294</div>
<div class="t d" style="left:286.5px;width:90.0px;text-align:center;top:439.55px;font-size:16.8px;transform:translateX(-1.5px) scaleX(0.95)">Yes</div>
<div class="t d" style="left:386.3px;top:439.55px;font-size:16.8px;transform:scaleX(0.94);transform-origin:0 0">1488</div>
<div class="t d" style="left:461.3px;top:439.55px;font-size:16.8px;transform:scaleX(0.94);transform-origin:0 0">1488</div>
<div class="t d" style="left:536.2px;top:439.55px;font-size:16.8px;transform:scaleX(0.94);transform-origin:0 0">16</div>
<div class="t d" style="left:609.8px;top:439.55px;font-size:16.8px">C</div>
<div class="t d" style="left:686.0px;top:439.55px;font-size:16.8px;transform:scaleX(0.98);transform-origin:0 0">2025 10 7.046172</div>
<div class="t d" style="left:866.0px;top:439.55px;font-size:16.8px">67.595872</div>
<div class="t d" style="left:971.0px;top:439.55px;font-size:16.8px">43.295564</div>
<div class="t d" style="left:1076.0px;top:439.55px;font-size:16.8px">18.653570</div>
<div class="t d" style="left:1181.0px;top:439.55px;font-size:16.8px">0.773818</div>
<div class="t d" style="left:1286.0px;top:439.55px;font-size:16.8px">219.710854</div>
<div class="t d" style="left:1391.0px;top:439.55px;font-size:16.8px">65.869383</div>
<div class="t d" style="left:1496.0px;top:439.55px;font-size:16.8px">74.558878</div>
<div class="t d" style="left:1601.0px;top:439.55px;font-size:16.8px">880.08</div>
<div class="t d" style="left:1691.0px;top:439.55px;font-size:16.8px">722.48</div>
<div class="t d" style="left:1780.4px;top:439.55px;font-size:16.8px;transform:scaleX(0.95);transform-origin:0 0">Yes</div>
</div>
<div class="a" style="left:1916px;top:101px;width:24px;height:487px;background:#f0f0f0"></div>
<div class="a" style="left:1916px;top:126px;width:22px;height:148px;background:#cdcdcd"></div>
<div class="a" style="left:23px;top:588px;width:1917px;height:24px;background:#f0f0f0"></div>
<div class="a" style="left:555px;top:588.8px;width:1334px;height:22px;background:#cdcdcd"></div>
<svg class="a" style="left:0;top:0" width="1961" height="690" viewBox="0 0 1961 690"><g fill="#606060">
<polygon points="1922,113.9 1927.2,109 1932.4,113.9 1932.4,118.3 1927.2,113.4 1922,118.3"/>
<polygon points="1922,570.2 1927.2,575.1 1932.4,570.2 1932.4,574.6 1927.2,579.5 1922,574.6"/>
<polygon points="39,594.4 34.1,599.5 39,604.6 34.6,604.6 29.7,599.5 34.6,594.4"/>
<polygon points="1897.7,594.4 1902.6,599.5 1897.7,604.6 1902.1,604.6 1907,599.5 1902.1,594.4"/>
</g></svg>
<div class="a" style="left:20px;top:635px;width:265px;height:34px;border:2px solid #1e1e1e;background:#fff"></div>
<div class="t" style="left:19px;width:265px;text-align:center;top:641.9px;font-family:'Liberation Mono',monospace;font-size:19.85px;transform:scaleY(1.1);transform-origin:0 0">Plate Solved: Yes</div>
<div class="a" style="left:291px;top:635px;width:322.5px;height:34px;border:2px solid #1e1e1e;background:#fff"></div>
<div class="t" style="left:290px;width:322.5px;text-align:center;top:641.9px;font-family:'Liberation Mono',monospace;font-size:19.85px;transform:scaleY(1.1);transform-origin:0 0">Total Size: 211.16 MB</div>
<div class="a" style="left:620px;top:635px;width:332.5px;height:34px;border:2px solid #1e1e1e;background:#fff"></div>
<div class="t" style="left:619px;width:332.5px;text-align:center;top:641.9px;font-family:'Liberation Mono',monospace;font-size:19.85px;transform:scaleY(1.1);transform-origin:0 0">Total Exp: 2.778 hrs</div>
<div class="a" style="left:960.5px;top:635px;width:332.5px;height:34px;border:2px solid #1e1e1e;background:#fff"></div>
<div class="t" style="left:959.5px;width:332.5px;text-align:center;top:641.9px;font-family:'Liberation Mono',monospace;font-size:19.85px;transform:scaleY(1.1);transform-origin:0 0">Total Time: 2.872 hrs</div>
<div class="a" style="left:1299.5px;top:635px;width:296.5px;height:34px;border:2px solid #1e1e1e;background:#fff"></div>
<div class="t" style="left:1298.5px;width:296.5px;text-align:center;top:641.9px;font-family:'Liberation Mono',monospace;font-size:19.85px;transform:scaleY(1.1);transform-origin:0 0">Image Count: 50</div>
<div class="a" style="left:1950.8px;top:671.1999999999999px;width:2.4px;height:2.4px;background:#bdbdbd"></div>
<div class="a" style="left:1946.2px;top:675.8px;width:2.4px;height:2.4px;background:#bdbdbd"></div>
<div class="a" style="left:1950.8px;top:675.8px;width:2.4px;height:2.4px;background:#bdbdbd"></div>
<div class="a" style="left:1941.8px;top:680.3px;width:2.4px;height:2.4px;background:#bdbdbd"></div>
<div class="a" style="left:1946.2px;top:680.3px;width:2.4px;height:2.4px;background:#bdbdbd"></div>
<div class="a" style="left:1950.8px;top:680.3px;width:2.4px;height:2.4px;background:#bdbdbd"></div>
</body></html>
